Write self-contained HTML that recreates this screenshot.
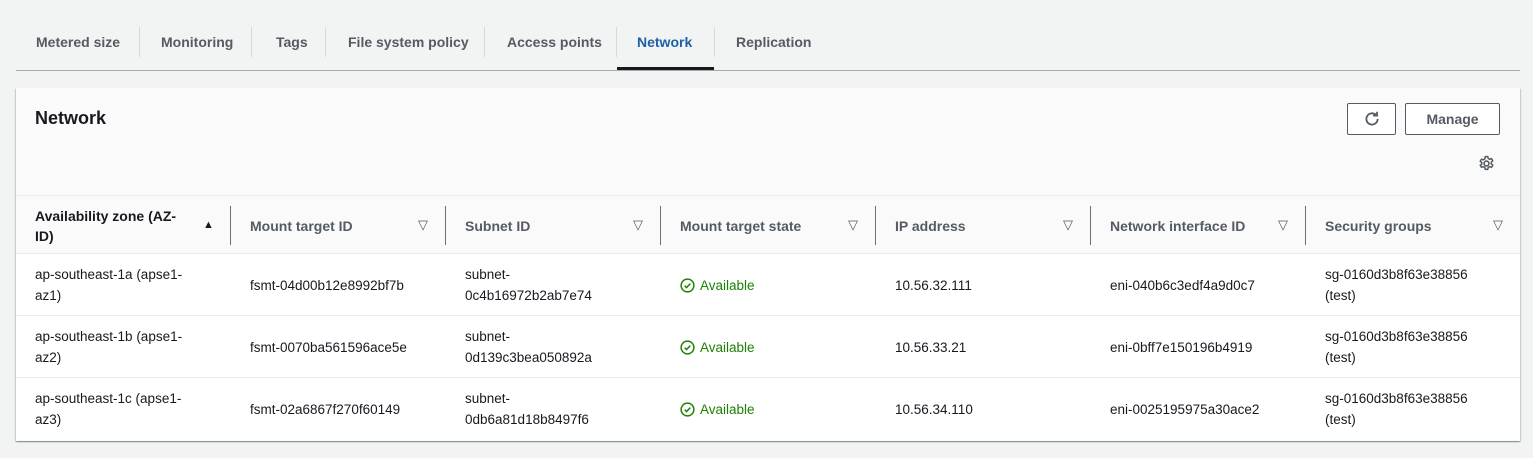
<!DOCTYPE html>
<html><head><style>
*{box-sizing:border-box;margin:0;padding:0}
body{width:1533px;height:458px;background:#f2f3f3;font-family:"Liberation Sans",sans-serif;font-size:13.5px;color:#16191f;position:relative;overflow:hidden}
.tabs{position:absolute;left:16px;top:0;width:1504px;height:71px;border-bottom:1px solid #aaaaaa}
.tab{position:absolute;top:29px;height:28px;line-height:26px;font-weight:bold;color:#545b64;font-size:14px}
.sep{position:absolute;top:27px;width:1px;height:30px;background:#d5dbdb}
.active{color:#1f5fa6}
.ul{position:absolute;left:601px;top:67px;width:97px;height:3px;background:#16191f}
.panel{position:absolute;left:16px;top:88px;width:1504px;height:353px;background:#fafafa;box-shadow:0 1px 1px rgba(0,28,36,.3),1px 1px 1px rgba(0,28,36,.15),-1px 1px 1px rgba(0,28,36,.15)}
h2{position:absolute;left:19px;top:20px;font-size:18px;font-weight:bold}
.btn{position:absolute;top:15px;height:32px;border:1px solid #545b64;border-radius:2px;background:#fff;font-weight:bold;color:#545b64;text-align:center;line-height:30px;font-size:14px}
.hdr{position:absolute;left:0;top:107px;width:1504px;height:59px;border-top:1px solid #eaeded;border-bottom:1px solid #eaeded}
.th{position:absolute;top:0;height:59px;font-weight:bold;color:#545b64;display:flex;align-items:center;font-size:14px;line-height:20px}
.vs{position:absolute;top:10px;width:1px;height:39px;background:#687078}
.arr{position:absolute;top:21px;font-size:13px;line-height:16px;color:#545b64}
.row{position:absolute;left:0;width:1504px;height:62px;background:#fff;border-bottom:1px solid #eaeded}
.td{position:absolute;top:0;height:62px;display:flex;align-items:center;line-height:21px;font-size:13.5px}
.ok{color:#1d8102}
</style></head><body>
<div class="tabs">
<div class="tab" style="left:20px">Metered size</div><div class="sep" style="left:123px"></div>
<div class="tab" style="left:145px">Monitoring</div><div class="sep" style="left:235px"></div>
<div class="tab" style="left:260px">Tags</div><div class="sep" style="left:309px"></div>
<div class="tab" style="left:332px">File system policy</div><div class="sep" style="left:468px"></div>
<div class="tab" style="left:491px">Access points</div><div class="sep" style="left:600px"></div>
<div class="tab active" style="left:621px">Network</div><div class="sep" style="left:698px"></div>
<div class="tab" style="left:720px">Replication</div>
<div class="ul"></div>
</div>
<div class="panel">
<h2>Network</h2>
<div class="btn" style="left:1331px;width:49px"><svg width="18" height="18" viewBox="0 0 16 16" style="margin-top:6px"><path d="M13 8a5 5 0 1 1-1.5-3.6" fill="none" stroke="#545b64" stroke-width="1.6"/><path d="M12.5 1.5v3.5H9" fill="none" stroke="#545b64" stroke-width="1.6"/></svg></div>
<div class="btn" style="left:1389px;width:95px">Manage</div>
<svg style="position:absolute;left:1462px;top:67px" width="17" height="17" viewBox="0 0 16 16"><circle cx="8" cy="8" r="2.3" fill="none" stroke="#545b64" stroke-width="1.5"/><path d="M6.8 1.5h2.4l.4 1.8 1.3.7 1.8-.6 1.2 2-1.4 1.3v1.6l1.4 1.3-1.2 2-1.8-.6-1.3.7-.4 1.8H6.8l-.4-1.8-1.3-.7-1.8.6-1.2-2L3.5 8.8V7.2L2.1 5.9l1.2-2 1.8.6 1.3-.7z" fill="none" stroke="#545b64" stroke-width="1.4" stroke-linejoin="round"/></svg>
<div class="hdr">
<div class="th" style="left:19px;width:150px;color:#16191f">Availability zone (AZ-ID)</div><span class="arr" style="left:187px;color:#16191f;font-size:11px">▲</span>
<div class="vs" style="left:214px"></div>
<div class="th" style="left:234px">Mount target ID</div><span class="arr" style="left:402px">▽</span>
<div class="vs" style="left:429px"></div>
<div class="th" style="left:449px">Subnet ID</div><span class="arr" style="left:617px">▽</span>
<div class="vs" style="left:644px"></div>
<div class="th" style="left:664px">Mount target state</div><span class="arr" style="left:832px">▽</span>
<div class="vs" style="left:859px"></div>
<div class="th" style="left:879px">IP address</div><span class="arr" style="left:1047px">▽</span>
<div class="vs" style="left:1074px"></div>
<div class="th" style="left:1094px">Network interface ID</div><span class="arr" style="left:1262px">▽</span>
<div class="vs" style="left:1289px"></div>
<div class="th" style="left:1309px">Security groups</div><span class="arr" style="left:1477px">▽</span>
</div>
<div class="row" style="top:166px">
<div class="td" style="left:19px;width:170px">ap-southeast-1a (apse1-az1)</div>
<div class="td" style="left:234px">fsmt-04d00b12e8992bf7b</div>
<div class="td" style="left:449px;width:150px">subnet-0c4b16972b2ab7e74</div>
<div class="td ok" style="left:664px"><svg width="15" height="15" viewBox="0 0 16 16" style="margin-right:5px"><circle cx="8" cy="8" r="6.8" fill="none" stroke="#1d8102" stroke-width="1.6"/><path d="M5 8.2l2 2 4-4.2" fill="none" stroke="#1d8102" stroke-width="1.6"/></svg>Available</div>
<div class="td" style="left:879px">10.56.32.111</div>
<div class="td" style="left:1094px">eni-040b6c3edf4a9d0c7</div>
<div class="td" style="left:1309px;width:175px">sg-0160d3b8f63e38856 (test)</div>
</div>
<div class="row" style="top:228px">
<div class="td" style="left:19px;width:170px">ap-southeast-1b (apse1-az2)</div>
<div class="td" style="left:234px">fsmt-0070ba561596ace5e</div>
<div class="td" style="left:449px;width:150px">subnet-0d139c3bea050892a</div>
<div class="td ok" style="left:664px"><svg width="15" height="15" viewBox="0 0 16 16" style="margin-right:5px"><circle cx="8" cy="8" r="6.8" fill="none" stroke="#1d8102" stroke-width="1.6"/><path d="M5 8.2l2 2 4-4.2" fill="none" stroke="#1d8102" stroke-width="1.6"/></svg>Available</div>
<div class="td" style="left:879px">10.56.33.21</div>
<div class="td" style="left:1094px">eni-0bff7e150196b4919</div>
<div class="td" style="left:1309px;width:175px">sg-0160d3b8f63e38856 (test)</div>
</div>
<div class="row" style="top:290px;border-bottom:none">
<div class="td" style="left:19px;width:170px">ap-southeast-1c (apse1-az3)</div>
<div class="td" style="left:234px">fsmt-02a6867f270f60149</div>
<div class="td" style="left:449px;width:150px">subnet-0db6a81d18b8497f6</div>
<div class="td ok" style="left:664px"><svg width="15" height="15" viewBox="0 0 16 16" style="margin-right:5px"><circle cx="8" cy="8" r="6.8" fill="none" stroke="#1d8102" stroke-width="1.6"/><path d="M5 8.2l2 2 4-4.2" fill="none" stroke="#1d8102" stroke-width="1.6"/></svg>Available</div>
<div class="td" style="left:879px">10.56.34.110</div>
<div class="td" style="left:1094px">eni-0025195975a30ace2</div>
<div class="td" style="left:1309px;width:175px">sg-0160d3b8f63e38856 (test)</div>
</div>
</div>
</body></html>
